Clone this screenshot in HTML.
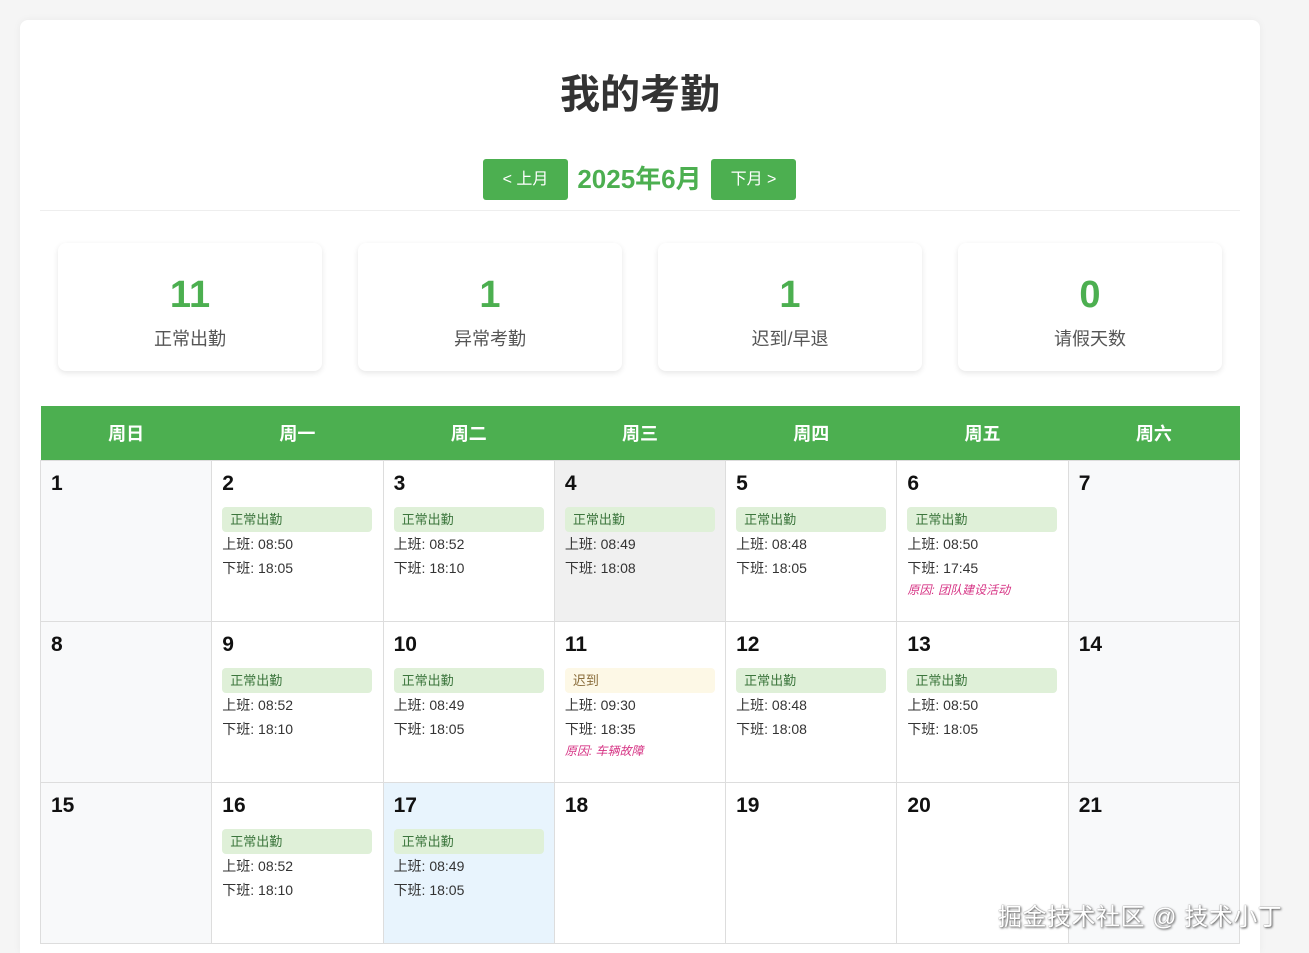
<!DOCTYPE html>
<html><head><meta charset="utf-8"><style>
*{box-sizing:border-box;margin:0;padding:0}
html,body{width:1309px;height:953px;overflow:hidden}
body{background:#f5f5f5;font-family:"Liberation Sans","Noto Sans CJK SC",sans-serif;color:#333;position:relative}
.card{position:absolute;left:20px;top:20px;width:1240px;height:933px;background:#fff;border-radius:8px 8px 0 0;box-shadow:0 0 8px rgba(0,0,0,.05);overflow:hidden}
h1{position:absolute;left:0;width:1240px;top:50px;text-align:center;font-size:40px;font-weight:bold;color:#333;line-height:50px}
.btn{position:absolute;top:139px;height:41px;width:85px;background:#4caf50;color:#fff;border-radius:3px;font-size:16px;line-height:41px;text-align:center}
.month{position:absolute;top:139px;left:548px;width:143px;line-height:41px;text-align:center;color:#4caf50;font-weight:bold;font-size:26px}
.hr{position:absolute;left:20px;top:190px;width:1200px;height:1px;background:#eee}
.stat{position:absolute;top:223px;width:264px;height:128px;border-radius:8px;background:#fff;box-shadow:0 2px 6px rgba(0,0,0,.1);text-align:center}
.stat b{display:block;margin-top:30px;font-size:38px;line-height:44px;color:#4caf50}
.stat span{display:block;margin-top:8px;font-size:18px;color:#555}
table{position:absolute;left:20px;top:386px;border-collapse:collapse;width:1200px;table-layout:fixed}
th{background:#4caf50;color:#fff;height:54px;font-size:18px;font-weight:bold}
td{border:1px solid #ddd;height:161px;vertical-align:top;padding:10px 10px;background:#fff}
td.we{background:#f8f9fa}
td.hv{background:#f0f0f0}
td.td{background:#e8f4fd}
.d{font-size:21px;font-weight:bold;color:#111;line-height:26px}
.bg{margin-top:10px;height:25px;border-radius:4px;background:#dff0d8;color:#3c763d;font-size:13px;line-height:25px;padding-left:8px;width:150px}
.bg.late{background:#fdf8e6;color:#8a6d3b}
.t{font-size:14px;line-height:23px;color:#333;margin-top:1px}
.r{font-size:12px;font-style:italic;color:#d63384;line-height:20px}
.wm{position:absolute;left:998px;top:897px;font-size:24px;letter-spacing:0.5px;color:#fff;text-shadow:1px 1px 2px #555,0 0 1px #666;white-space:nowrap}
</style></head><body>
<div class="card">
<h1>我的考勤</h1>
<div class="btn" style="left:463px">&lt; 上月</div>
<div class="month">2025年6月</div>
<div class="btn" style="left:691px">下月 &gt;</div>
<div class="hr"></div>
<div class="stat" style="left:38px"><b>11</b><span>正常出勤</span></div>
<div class="stat" style="left:338px"><b>1</b><span>异常考勤</span></div>
<div class="stat" style="left:638px"><b>1</b><span>迟到/早退</span></div>
<div class="stat" style="left:938px"><b>0</b><span>请假天数</span></div>
<table>
<tr><th>周日</th><th>周一</th><th>周二</th><th>周三</th><th>周四</th><th>周五</th><th>周六</th></tr>
<tr>
<td class="we"><div class="d">1</div></td>
<td><div class="d">2</div><div class="bg">正常出勤</div><div class="t">上班: 08:50</div><div class="t">下班: 18:05</div></td>
<td><div class="d">3</div><div class="bg">正常出勤</div><div class="t">上班: 08:52</div><div class="t">下班: 18:10</div></td>
<td class="hv"><div class="d">4</div><div class="bg">正常出勤</div><div class="t">上班: 08:49</div><div class="t">下班: 18:08</div></td>
<td><div class="d">5</div><div class="bg">正常出勤</div><div class="t">上班: 08:48</div><div class="t">下班: 18:05</div></td>
<td><div class="d">6</div><div class="bg">正常出勤</div><div class="t">上班: 08:50</div><div class="t">下班: 17:45</div><div class="r">原因: 团队建设活动</div></td>
<td class="we"><div class="d">7</div></td>
</tr>
<tr>
<td class="we"><div class="d">8</div></td>
<td><div class="d">9</div><div class="bg">正常出勤</div><div class="t">上班: 08:52</div><div class="t">下班: 18:10</div></td>
<td><div class="d">10</div><div class="bg">正常出勤</div><div class="t">上班: 08:49</div><div class="t">下班: 18:05</div></td>
<td><div class="d">11</div><div class="bg late">迟到</div><div class="t">上班: 09:30</div><div class="t">下班: 18:35</div><div class="r">原因: 车辆故障</div></td>
<td><div class="d">12</div><div class="bg">正常出勤</div><div class="t">上班: 08:48</div><div class="t">下班: 18:08</div></td>
<td><div class="d">13</div><div class="bg">正常出勤</div><div class="t">上班: 08:50</div><div class="t">下班: 18:05</div></td>
<td class="we"><div class="d">14</div></td>
</tr>
<tr>
<td class="we"><div class="d">15</div></td>
<td><div class="d">16</div><div class="bg">正常出勤</div><div class="t">上班: 08:52</div><div class="t">下班: 18:10</div></td>
<td class="td"><div class="d">17</div><div class="bg">正常出勤</div><div class="t">上班: 08:49</div><div class="t">下班: 18:05</div></td>
<td><div class="d">18</div></td>
<td><div class="d">19</div></td>
<td><div class="d">20</div></td>
<td class="we"><div class="d">21</div></td>
</tr>
</table>
</div>
<div class="wm">掘金技术社区 @ 技术小丁</div>
</body></html>
